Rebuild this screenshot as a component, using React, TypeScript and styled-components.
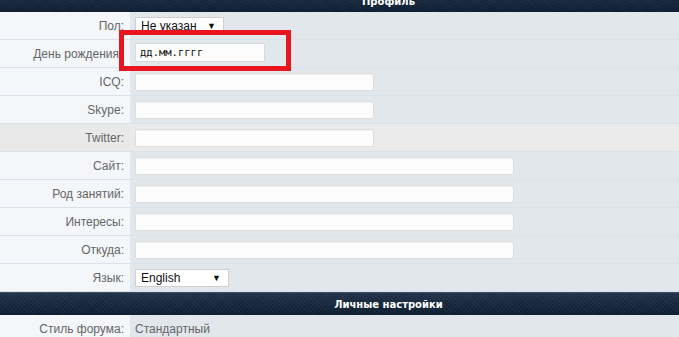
import styled, { createGlobalStyle } from 'styled-components';

const GlobalStyle = createGlobalStyle`
    html, body {
        margin: 0;
        padding: 0;
        background: #e2e7ec;
        overflow: hidden;
    }
    body {
        font-family: "Liberation Sans", Arial, sans-serif;
    }
`;

type Field = {
    label: string;
    kind: 'select' | 'date' | 'text';
    width?: number;
    value?: string;
    hover?: boolean;
    gap?: number;
};

const profileFields: Field[] = [
    { label: 'Пол:', kind: 'select', width: 89, value: 'Не указан' },
    { label: 'День рождения', kind: 'date', gap: 11 },
    { label: 'ICQ:', kind: 'text', width: 239 },
    { label: 'Skype:', kind: 'text', width: 239 },
    { label: 'Twitter:', kind: 'text', width: 239, hover: true },
    { label: 'Сайт:', kind: 'text', width: 379 },
    { label: 'Род занятий:', kind: 'text', width: 379 },
    { label: 'Интересы:', kind: 'text', width: 379 },
    { label: 'Откуда:', kind: 'text', width: 379 },
    { label: 'Язык:', kind: 'select', width: 94, value: 'English' },
];

const App = () => {
    return (
        <Page>
            <GlobalStyle />
            <SectionHeader $first>Профиль</SectionHeader>
            {profileFields.map((f) => (
                <Row key={f.label} $hover={f.hover}>
                    <Label $hover={f.hover} $gap={f.gap}>{f.label}</Label>
                    <Cell>
                        {f.kind === 'select' && (
                            <Select $width={f.width || 90}>
                                <span>{f.value}</span>
                                <Arrow>▼</Arrow>
                            </Select>
                        )}
                        {f.kind === 'date' && (
                            <Highlight>
                                <DateInput defaultValue="дд.мм.гггг" />
                            </Highlight>
                        )}
                        {f.kind === 'text' && <TextInput $width={f.width || 239} />}
                    </Cell>
                </Row>
            ))}
            <SectionHeader>Личные настройки</SectionHeader>
            <Row>
                <Label>Стиль форума:</Label>
                <Cell>
                    <Plain>Стандартный</Plain>
                </Cell>
            </Row>
        </Page>
    );
};

export default App;

const Page = styled.div`
    display: flex;
    flex-direction: column;
    width: 100%;
    margin-top: -11px;
`;

const SectionHeader = styled.div<{ $first?: boolean }>`
    height: 23px;
    line-height: 23px;
    padding-left: 98px;
    text-align: center;
    color: #ffffff;
    font-family: "DejaVu Sans", Tahoma, sans-serif;
    font-size: 10px;
    font-weight: bold;
    border-top: 1px solid ${(p) => (p.$first ? '#1b2c40' : '#3d5068')};
    box-sizing: border-box;
    background:
        repeating-linear-gradient(45deg, rgba(255, 255, 255, 0.03) 0 1px, transparent 1px 3px),
        repeating-linear-gradient(-45deg, rgba(0, 0, 0, 0.12) 0 1px, transparent 1px 3px),
        linear-gradient(#22354c, #0f1f33);
`;

const Row = styled.div<{ $hover?: boolean }>`
    display: grid;
    grid-template-columns: 130px 1fr;
    height: 28px;
    box-sizing: border-box;
    border-bottom: 1px solid #d9e1ea;
    background: ${(p) => (p.$hover ? '#ebeaea' : '#e2e7ec')};
`;

const Label = styled.div<{ $hover?: boolean; $gap?: number }>`
    display: flex;
    align-items: center;
    justify-content: flex-end;
    padding-right: ${(p) => p.$gap ?? 6}px;
    font-size: 12px;
    color: #666666;
    background: ${(p) => (p.$hover ? '#e9e9e9' : '#f4f6f9')};
    white-space: nowrap;
`;

const Cell = styled.div`
    display: flex;
    align-items: center;
    padding-left: 5px;
    position: relative;
`;

const TextInput = styled.input<{ $width: number }>`
    width: ${(p) => p.$width}px;
    height: 18px;
    box-sizing: border-box;
    border: 1px solid #dedede;
    border-radius: 2px;
    background: #fcfcfc;
    box-shadow: inset 0 1px 1px rgba(0, 0, 0, 0.04);
    outline: none;
    padding: 0 4px;
`;

const Highlight = styled.div`
    position: absolute;
    left: -11px;
    top: -10px;
    width: 172px;
    height: 41px;
    box-sizing: border-box;
    border: 5px solid #e8151f;
    padding: 7px 0 0 11px;
    z-index: 2;
`;

const DateInput = styled.input`
    width: 130px;
    height: 19px;
    box-sizing: border-box;
    border: 1px solid #d9d9d9;
    border-radius: 1px;
    background: #fcfcfc;
    outline: none;
    padding: 0 4px;
    font-family: "DejaVu Sans Mono", "Liberation Mono", monospace;
    font-size: 10.5px;
    color: #111111;
`;

const Select = styled.div<{ $width: number }>`
    display: flex;
    align-items: center;
    justify-content: space-between;
    width: ${(p) => p.$width}px;
    height: 18px;
    box-sizing: border-box;
    border: 1px solid #cfcfcf;
    background: #ffffff;
    padding: 0 7px 0 5px;
    font-size: 12px;
    color: #111111;
`;

const Arrow = styled.span`
    font-size: 9px;
    color: #111111;
`;

const Plain = styled.div`
    font-size: 12px;
    color: #666666;
`;
